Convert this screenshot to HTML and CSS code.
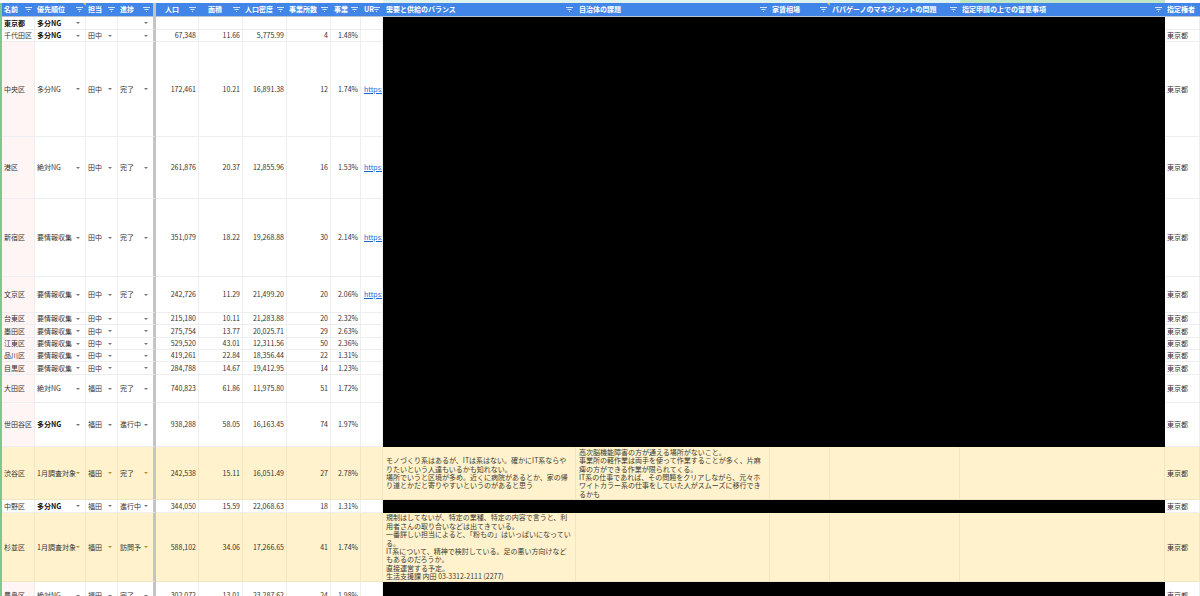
FILE: index.html
```html
<!DOCTYPE html>
<html lang="ja">
<head>
  <meta charset="UTF-8">
  <title>東京都 区別リスト</title>
  <link rel="stylesheet" href="styles.css">
</head>
<body>
  <svg class="defs" width="0" height="0">
    <symbol id="f" viewBox="0 0 7 5"><path d="M0 .5h7M1.5 2.5h4M3 4.5h1" stroke="currentColor" stroke-width="1" fill="none"/></symbol>
  </svg>
  <div class="strip"><i class="s1"></i><i class="s2"></i><i class="s3"></i></div>
  <table class="sheet">
    <colgroup>
      <col class="c-name"><col class="c-pri"><col class="c-tan"><col class="c-prog"><col class="c-pop"><col class="c-area"><col class="c-dens"><col class="c-cnt"><col class="c-rate"><col class="c-url"><col class="c-demand"><col class="c-issue"><col class="c-rent"><col class="c-pap"><col class="c-note"><col class="c-auth">
    </colgroup>
    <thead>
      <tr>
        <th>名前<svg><use href="#f"/></svg></th>
        <th>優先順位<svg><use href="#f"/></svg><b class="note"></b></th>
        <th>担当<svg><use href="#f"/></svg></th>
        <th class="freeze">進捗<svg><use href="#f"/></svg></th>
        <th class="mid">人口<svg><use href="#f"/></svg></th>
        <th class="mid">面積<svg><use href="#f"/></svg></th>
        <th>人口密度<svg><use href="#f"/></svg></th>
        <th>事業所数<svg><use href="#f"/></svg></th>
        <th class="wide-pad">事業<svg><use href="#f"/></svg></th>
        <th class="wide-pad">UR<svg><use href="#f"/></svg></th>
        <th class="wide-pad">需要と供給のバランス<svg><use href="#f"/></svg></th>
        <th class="wide-pad">自治体の課題<svg><use href="#f"/></svg></th>
        <th>家賃相場<svg><use href="#f"/></svg><b class="note"></b></th>
        <th>パパゲーノのマネジメントの問題<svg><use href="#f"/></svg></th>
        <th>指定申請の上での留意事項<svg><use href="#f"/></svg></th>
        <th>指定権者</th>
      </tr>
    </thead>
    <tbody>
      <tr class="h13">
        <td class="bold">東京都</td><td class="bold dd">多分NG</td><td></td><td class="dd freeze"></td>
        <td></td><td></td><td></td><td></td><td></td><td></td>
        <td class="black" colspan="5"></td><td></td>
      </tr>
      <tr class="h12">
        <td>千代田区</td><td class="bold dd">多分NG</td><td class="dd">田中</td><td class="dd freeze"></td>
        <td class="n">67,348</td><td class="n">11.66</td><td class="n">5,775.99</td><td class="n">4</td><td class="n">1.48%</td><td></td>
        <td class="black" colspan="5"></td><td>東京都</td>
      </tr>
      <tr class="h95 pink">
        <td>中央区</td><td class="dd">多分NG</td><td class="dd">田中</td><td class="dd freeze">完了</td>
        <td class="n">172,461</td><td class="n">10.21</td><td class="n">16,891.38</td><td class="n">12</td><td class="n">1.74%</td><td class="url"><a>https://</a></td>
        <td class="black" colspan="5"></td><td>東京都</td>
      </tr>
      <tr class="h62 pink">
        <td>港区</td><td class="dd">絶対NG</td><td class="dd">田中</td><td class="dd freeze">完了</td>
        <td class="n">261,876</td><td class="n">20.37</td><td class="n">12,855.96</td><td class="n">16</td><td class="n">1.53%</td><td class="url"><a>https://</a></td>
        <td class="black" colspan="5"></td><td>東京都</td>
      </tr>
      <tr class="h78 pink">
        <td>新宿区</td><td class="dd">要情報収集</td><td class="dd">田中</td><td class="dd freeze">完了</td>
        <td class="n">351,079</td><td class="n">18.22</td><td class="n">19,268.88</td><td class="n">30</td><td class="n">2.14%</td><td class="url"><a>https://</a></td>
        <td class="black" colspan="5"></td><td>東京都</td>
      </tr>
      <tr class="h36 pink">
        <td>文京区</td><td class="dd">要情報収集</td><td class="dd">田中</td><td class="dd freeze">完了</td>
        <td class="n">242,726</td><td class="n">11.29</td><td class="n">21,499.20</td><td class="n">20</td><td class="n">2.06%</td><td class="url"><a>https://</a></td>
        <td class="black" colspan="5"></td><td>東京都</td>
      </tr>
      <tr class="h12 pink">
        <td>台東区</td><td class="dd">要情報収集</td><td class="dd">田中</td><td class="dd freeze"></td>
        <td class="n">215,180</td><td class="n">10.11</td><td class="n">21,283.88</td><td class="n">20</td><td class="n">2.32%</td><td></td>
        <td class="black" colspan="5"></td><td>東京都</td>
      </tr>
      <tr class="h13 pink">
        <td>墨田区</td><td class="dd">要情報収集</td><td class="dd">田中</td><td class="dd freeze"></td>
        <td class="n">275,754</td><td class="n">13.77</td><td class="n">20,025.71</td><td class="n">29</td><td class="n">2.63%</td><td></td>
        <td class="black" colspan="5"></td><td>東京都</td>
      </tr>
      <tr class="h12 pink">
        <td>江東区</td><td class="dd">要情報収集</td><td class="dd">田中</td><td class="dd freeze"></td>
        <td class="n">529,520</td><td class="n">43.01</td><td class="n">12,311.56</td><td class="n">50</td><td class="n">2.36%</td><td></td>
        <td class="black" colspan="5"></td><td>東京都</td>
      </tr>
      <tr class="h12 pink">
        <td>品川区</td><td class="dd">要情報収集</td><td class="dd">田中</td><td class="dd freeze"></td>
        <td class="n">419,261</td><td class="n">22.84</td><td class="n">18,356.44</td><td class="n">22</td><td class="n">1.31%</td><td></td>
        <td class="black" colspan="5"></td><td>東京都</td>
      </tr>
      <tr class="h13 pink">
        <td>目黒区</td><td class="dd">要情報収集</td><td class="dd">田中</td><td class="dd freeze"></td>
        <td class="n">284,788</td><td class="n">14.67</td><td class="n">19,412.95</td><td class="n">14</td><td class="n">1.23%</td><td></td>
        <td class="black" colspan="5"></td><td>東京都</td>
      </tr>
      <tr class="h28 pink">
        <td>大田区</td><td class="dd">絶対NG</td><td class="dd">福田</td><td class="dd freeze">完了</td>
        <td class="n">740,823</td><td class="n">61.86</td><td class="n">11,975.80</td><td class="n">51</td><td class="n">1.72%</td><td></td>
        <td class="black" colspan="5"></td><td>東京都</td>
      </tr>
      <tr class="h44 pink">
        <td>世田谷区</td><td class="bold dd">多分NG</td><td class="dd">福田</td><td class="dd freeze">進行中</td>
        <td class="n">938,288</td><td class="n">58.05</td><td class="n">16,163.45</td><td class="n">74</td><td class="n">1.97%</td><td></td>
        <td class="black" colspan="5"></td><td>東京都</td>
      </tr>
      <tr class="h53 yellow">
        <td>渋谷区</td><td class="dd">1月調査対象</td><td class="dd">福田</td><td class="dd freeze">完了</td>
        <td class="n">242,538</td><td class="n">15.11</td><td class="n">16,051.49</td><td class="n">27</td><td class="n">2.78%</td><td></td>
        <td class="memo">モノづくり系はあるが、ITは系はない。確かにIT系ならやりたいという人達もいるかも知れない。<br>場所でいうと区境が多め。近くに病院があるとか、家の帰り道とかだと寄りやすいというのがあると思う</td>
        <td class="memo">高次脳機能障害の方が通える場所がないこと。<br>事業所の軽作業は両手を使って作業することが多く、片麻痺の方ができる作業が限られてくる。<br>IT系の仕事であれば、その問題をクリアしながら、元々ホワイトカラー系の仕事をしていた人がスムーズに移行できるかも</td>
        <td></td><td></td><td></td><td>東京都</td>
      </tr>
      <tr class="h13">
        <td>中野区</td><td class="bold dd">多分NG</td><td class="dd">福田</td><td class="dd freeze">進行中</td>
        <td class="n">344,050</td><td class="n">15.59</td><td class="n">22,068.63</td><td class="n">18</td><td class="n">1.31%</td><td></td>
        <td class="black" colspan="5"></td><td>東京都</td>
      </tr>
      <tr class="h69 yellow">
        <td>杉並区</td><td class="dd">1月調査対象</td><td class="dd">福田</td><td class="dd freeze">訪問予</td>
        <td class="n">588,102</td><td class="n">34.06</td><td class="n">17,266.65</td><td class="n">41</td><td class="n">1.74%</td><td></td>
        <td class="memo">規制はしてないが、特定の業種、特定の内容で言うと、利用者さんの取り合いなどは出てきている。<br>一番詳しい担当によると、「粉もの」はいっぱいになっている。<br>IT系について、精神で検討している。足の悪い方向けなどもあるのだろうか。<br>直接運営する予定。<br>生活支援課 内田 03-3312-2111 (2277)</td>
        <td></td><td></td><td></td><td></td><td>東京都</td>
      </tr>
      <tr class="h28 pink">
        <td>豊島区</td><td class="dd">絶対NG</td><td class="dd">福田</td><td class="dd freeze">完了</td>
        <td class="n">302,072</td><td class="n">13.01</td><td class="n">23,287.62</td><td class="n">24</td><td class="n">1.98%</td><td></td>
        <td class="black" colspan="5"></td><td>東京都</td>
      </tr>
    </tbody>
  </table>
</body>
</html>
```

FILE: styles.css
```css
html, body {
  margin: 0;
  padding: 0;
  height: 100%;
  overflow: hidden;
  background: #fff;
  font-family: "Noto Sans CJK JP", "Noto Sans", sans-serif;
}

.defs {
  position: absolute;
}

/* thin row above the header */
.strip {
  height: 3px;
  display: flex;
  background: #fff;
}

.strip .s1 {
  width: 383px;
}

.strip .s2 {
  width: 577px;
  background: #dff3ee;
}

.strip .s3 {
  width: 205px;
  background: #bfe6c8;
}

.sheet {
  width: 1200px;
  table-layout: fixed;
  border-collapse: separate;
  border-spacing: 0;
  font-size: 7px;
  color: #333;
  border-left: 2px solid #7cc98f;
}

.c-name { width: 33px; }
.c-pri { width: 51px; }
.c-tan { width: 32px; }
.c-prog { width: 38px; }
.c-pop { width: 43px; }
.c-area { width: 44px; }
.c-dens { width: 44px; }
.c-cnt { width: 44px; }
.c-rate { width: 30px; }
.c-url { width: 22px; }
.c-demand { width: 193px; }
.c-issue { width: 194px; }
.c-rent { width: 60px; }
.c-pap { width: 130px; }
.c-note { width: 205px; }
.c-auth { width: 35px; }

th {
  position: relative;
  height: 13px;
  padding: 0 0 0 2px;
  background: #4285e8;
  color: #fff;
  font-size: 7px;
  line-height: 13px;
  font-weight: 700;
  text-align: left;
  white-space: nowrap;
  overflow: hidden;
  border-bottom: 1px solid #b7c4d6;
}

th svg {
  position: absolute;
  right: 3px;
  top: 4px;
  width: 7px;
  height: 5px;
  color: #d8e6fb;
}

th.mid {
  padding-left: 9px;
}

th.wide-pad {
  padding-left: 3px;
}

th .note {
  position: absolute;
  top: 0;
  right: 0;
  width: 0;
  height: 0;
  border-top: 3px solid #e8b838;
  border-left: 3px solid transparent;
}

td {
  position: relative;
  padding: 0 0 0 2px;
  line-height: 1;
  white-space: nowrap;
  overflow: hidden;
  border-right: 1px solid #eceef0;
  border-bottom: 1px solid #eceef0;
}

td.n {
  text-align: right;
  padding: 0 2px 0 0;
}

td.bold {
  font-weight: 700;
  color: #111;
}

/* dropdown chip arrow */
td.dd::after {
  content: "";
  position: absolute;
  right: 5px;
  top: 50%;
  margin-top: -1px;
  border-top: 2px solid #777;
  border-left: 2px solid transparent;
  border-right: 2px solid transparent;
}

.freeze {
  border-right: 3px solid #c4c4c4;
}

td.freeze {
  border-right: 3px solid #c4c4c4;
}

td.black {
  background: #000;
  border-color: #000;
}

td.url {
  padding-left: 3px;
}

td.url a {
  color: #1a66d6;
  text-decoration: underline;
}

td.memo {
  white-space: normal;
  line-height: 8.4px;
  padding: 0 3px;
  color: #3a3a30;
}

.pink td:first-child {
  background: #fff5f4;
}

.yellow td {
  background: #fff2cc;
  border-color: #f0e6c4;
}

.yellow td.freeze {
  border-right-color: #c4c4c4;
}

.yellow td.dd::after {
  border-top-color: #b8922a;
}

.h12 { height: 12px; }
.h13 { height: 13px; }
.h28 { height: 28px; }
.h36 { height: 36px; }
.h44 { height: 44px; }
.h53 { height: 53px; }
.h62 { height: 62px; }
.h69 { height: 69px; }
.h78 { height: 78px; }
.h95 { height: 95px; }
```
